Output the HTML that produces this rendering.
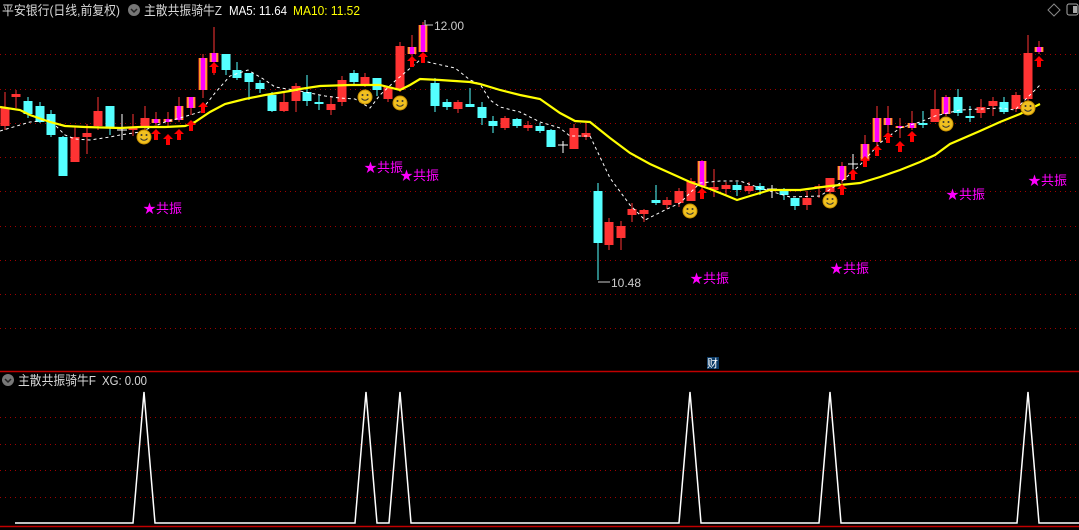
<!DOCTYPE html>
<html><head><meta charset="utf-8"><style>
html,body{margin:0;padding:0;background:#000;width:1079px;height:530px;overflow:hidden}
svg{display:block}
text{font-family:"Liberation Sans","Noto Sans CJK SC",sans-serif}
</style></head><body>
<svg id="s" width="1079" height="530" xmlns="http://www.w3.org/2000/svg">
<g id="grid"></g>
<line x1="0" y1="371.5" x2="1079" y2="371.5" stroke="#c00000" stroke-width="1.5"/>
<line x1="0" y1="526.5" x2="1079" y2="526.5" stroke="#c00000" stroke-width="1.5"/>
<g id="c"></g>
<text x="2" y="15" font-size="13" fill="#d8d8d8" textLength="118" lengthAdjust="spacingAndGlyphs">平安银行(日线,前复权)</text>
<circle cx="134" cy="10" r="6" fill="#777"/><path d="M131 9l3 3 3-3" stroke="#222" stroke-width="1.5" fill="none"/>
<text x="144" y="15" font-size="13" fill="#d8d8d8" textLength="78" lengthAdjust="spacingAndGlyphs">主散共振骑牛Z</text>
<text x="229" y="15" font-size="13" fill="#fff" textLength="58" lengthAdjust="spacingAndGlyphs">MA5: 11.64</text>
<text x="293" y="15" font-size="13" fill="#ffff00" textLength="67" lengthAdjust="spacingAndGlyphs">MA10: 11.52</text>
<path d="M1054 4l6 6-6 6-6-6z" stroke="#888" fill="none"/>
<rect x="1067" y="4" width="11" height="11" rx="2" stroke="#aaa" fill="none"/><rect x="1073" y="6" width="4" height="7" fill="#aaa"/>
<text x="434" y="30" font-size="12" fill="#ccc">12.00</text>
<path d="M433 25h-8v-5" stroke="#ccc" fill="none"/>
<text x="611" y="287" font-size="12" fill="#ccc">10.48</text>
<path d="M610 282h-12" stroke="#ccc" fill="none"/>
<rect x="707" y="357" width="12" height="12" fill="#0b3a66"/><text x="707" y="367" font-size="11" fill="#fff">财</text>
<circle cx="8" cy="380" r="6" fill="#777"/><path d="M5 379l3 3 3-3" stroke="#222" stroke-width="1.5" fill="none"/>
<text x="18" y="385" font-size="13" fill="#d8d8d8" textLength="78" lengthAdjust="spacingAndGlyphs">主散共振骑牛F</text>
<text x="102" y="385" font-size="13" fill="#d8d8d8" textLength="45" lengthAdjust="spacingAndGlyphs">XG: 0.00</text>
<polyline id="xg" fill="none" stroke="#fff" stroke-width="1.5"/>
</svg>
<script>
var NS="http://www.w3.org/2000/svg",g=document.getElementById('grid'),c=document.getElementById('c');
function el(t,a,p){var e=document.createElementNS(NS,t);for(var k in a)e.setAttribute(k,a[k]);(p||c).appendChild(e);return e;}
[54,89,123,157,191,226,260,294,328,417,444,470,497].forEach(function(y){el('line',{x1:0,x2:1079,y1:y+.5,y2:y+.5,stroke:'#a00000','stroke-dasharray':'1 4'},g);});
var K=[[5,108,126,92,130,'r'],[16,94,97,90,108,'r'],[28,101,114,97,118,'c'],[40,106,122,102,123,'c'],[51,114,135,110,137,'c'],[63,137,176,136,176,'c'],[75,137,162,126,162,'r'],[87,133,137,124,154,'r'],[98,111,126,97,130,'r'],[110,106,128,106,135,'c'],[122,129,131,114,140,'w'],[133,127,130,114,136,'r'],[145,118,127,106,130,'r'],[156,119,123,112,128,'m'],[168,119,122,112,126,'m'],[179,106,120,97,122,'m'],[191,97,108,97,115,'m'],[203,58,90,54,98,'m'],[214,53,62,27,75,'m'],[226,54,70,54,75,'c'],[237,70,78,62,80,'c'],[249,73,82,73,100,'c'],[260,83,89,80,93,'c'],[272,95,111,92,112,'c'],[284,102,111,92,112,'r'],[296,86,101,83,112,'r'],[307,92,101,75,106,'c'],[319,102,104,95,110,'c'],[331,104,110,96,115,'r'],[342,80,102,76,106,'r'],[354,73,82,70,86,'c'],[365,77,84,73,87,'r'],[377,78,90,78,96,'c'],[388,87,99,87,102,'r'],[400,46,90,42,92,'r'],[412,47,54,35,57,'m'],[423,25,52,22,52,'m'],[435,83,106,78,112,'c'],[447,102,107,99,110,'c'],[458,102,109,100,113,'r'],[470,104,107,88,107,'c'],[482,107,118,102,125,'c'],[493,121,126,116,133,'c'],[505,118,128,116,130,'r'],[517,119,126,118,128,'c'],[528,125,128,121,131,'r'],[540,126,131,123,133,'c'],[551,130,147,129,147,'c'],[563,144,146,141,153,'w'],[574,128,149,124,149,'r'],[586,133,137,123,140,'r'],[598,191,243,183,280,'c'],[609,222,245,218,250,'r'],[621,226,238,221,250,'r'],[632,209,215,203,222,'r'],[644,210,214,209,222,'r'],[656,200,203,185,205,'c'],[667,200,205,197,209,'r'],[679,191,203,188,207,'r'],[691,181,201,178,201,'r'],[702,161,186,160,193,'m'],[714,187,190,169,197,'r'],[726,185,189,182,195,'r'],[737,185,190,182,196,'c'],[749,186,191,182,194,'r'],[760,186,190,183,195,'c'],[772,188,190,185,198,'w'],[784,191,195,188,200,'c'],[795,198,206,198,210,'c'],[807,198,205,191,210,'r'],[819,186,188,184,198,'r'],[830,178,192,178,196,'r'],[842,166,180,162,183,'m'],[853,163,165,154,170,'w'],[865,144,160,135,166,'m'],[877,118,142,106,148,'m'],[888,118,125,106,132,'m'],[900,126,128,118,138,'m'],[912,123,128,111,130,'m'],[923,123,125,111,128,'c'],[935,109,122,90,122,'r'],[946,97,114,95,116,'m'],[958,97,113,89,116,'c'],[970,116,118,106,122,'c'],[981,107,113,99,118,'r'],[993,101,106,97,116,'r'],[1004,102,112,97,114,'c'],[1016,95,109,92,112,'r'],[1028,53,99,35,107,'r'],[1039,47,52,41,54,'m']];
var col={r:'#ff3333',c:'#54ffff',m:'#ff00ff',w:'#ffffff'};
var ma10=[[0,107],[20,110],[30,115],[50,122],[65,126],[85,127],[120,128],[140,127],[165,127],[185,126],[195,122],[210,112],[225,104],[245,99],[265,95],[290,91],[300,89],[320,86],[350,85],[380,85],[400,90],[410,85],[420,79],[440,80],[470,82],[480,84],[500,90],[520,95],[540,99],[560,113],[575,121],[590,122],[610,138],[630,153],[650,164],[670,173],[690,182],[710,189],[725,195],[737,200],[750,196],[770,190],[800,190],[830,186],[860,183],[880,177],[900,170],[920,162],[935,155],[950,144],[980,131],[1000,122],[1020,114],[1040,104]];
var ma5=[[0,131],[30,122],[50,120],[65,135],[75,139],[90,140],[110,137],[120,135],[140,132],[165,122],[180,118],[200,112],[215,93],[230,76],[248,70],[265,80],[275,87],[300,91],[325,96],[340,98],[355,99],[370,108],[380,95],[395,81],[420,60],[432,63],[455,68],[470,80],[480,84],[490,100],[500,107],[520,112],[540,122],[560,128],[570,136],[590,136],[610,178],[630,205],[645,220],[665,210],[680,203],[700,183],[720,181],[740,181],[760,188],[780,194],[790,197],[820,196],[840,183],[860,165],[880,143],[900,128],[920,122],[935,116],[960,110],[1000,108],[1015,110],[1040,85]];
K.forEach(function(k){var x=k[0],t=k[5];
 el('line',{x1:x,x2:x,y1:k[3],y2:k[4],stroke:t=='m'?'#ff3333':col[t],'stroke-width':1});
 var h=Math.max(1,k[2]-k[1]);
 if(t=='w'){el('line',{x1:x-5,x2:x+5,y1:k[1]+1,y2:k[1]+1,stroke:'#fff'});return;}
 if(t=='m'){el('rect',{x:x-4.5,y:k[1],width:9,height:h,fill:'#ff3333'});el('rect',{x:x-3.5,y:k[1],width:7,height:h,fill:'#ffff00'});el('rect',{x:x-2.5,y:k[1],width:5,height:h,fill:'#ff00ff'});return;}
 el('rect',{x:x-4.5,y:k[1],width:9,height:h,fill:col[t]});
});
el('polyline',{points:ma5.join(' '),fill:'none',stroke:'#fff','stroke-dasharray':'3 3','stroke-width':1});
el('polyline',{points:ma10.join(' '),fill:'none',stroke:'#ffff00','stroke-width':2.2});
[[156,135],[168,140],[179,135],[191,126],[203,108],[214,68],[412,62],[423,58],[702,194],[842,190],[853,175],[865,162],[877,151],[888,138],[900,147],[912,137],[1039,62]].forEach(function(a){var x=a[0],y=a[1];
 el('path',{d:'M'+x+' '+(y-6)+'l5 5h-3v6h-4v-6h-3z',fill:'#ff0000'});});
[[144,137],[365,97],[400,103],[690,211],[830,201],[946,124],[1028,108]].forEach(function(a){var x=a[0],y=a[1];
 el('circle',{cx:x,cy:y,r:7,fill:'#f0c020',stroke:'#c89000'});
 el('circle',{cx:x-2.5,cy:y-2,r:1,fill:'#333'});el('circle',{cx:x+2.5,cy:y-2,r:1,fill:'#333'});
 el('path',{d:'M'+(x-3.5)+' '+(y+1.5)+'q3.5 3.5 7 0',stroke:'#333',fill:'none'});});
[[143,208],[364,167],[400,175],[690,278],[830,268],[946,194],[1028,180]].forEach(function(a){
 var t=el('text',{x:a[0],y:a[1]+5,'font-size':13,fill:'#ff00ff'});t.textContent='★共振';});
var pk=[144,366,400,690,830,1028],pts=[[15,523]];
pk.forEach(function(p){pts.push([p-11,523],[p,392],[p+11,523]);});pts.push([1079,523]);
document.getElementById('xg').setAttribute('points',pts.join(' '));
</script>
</body></html>
